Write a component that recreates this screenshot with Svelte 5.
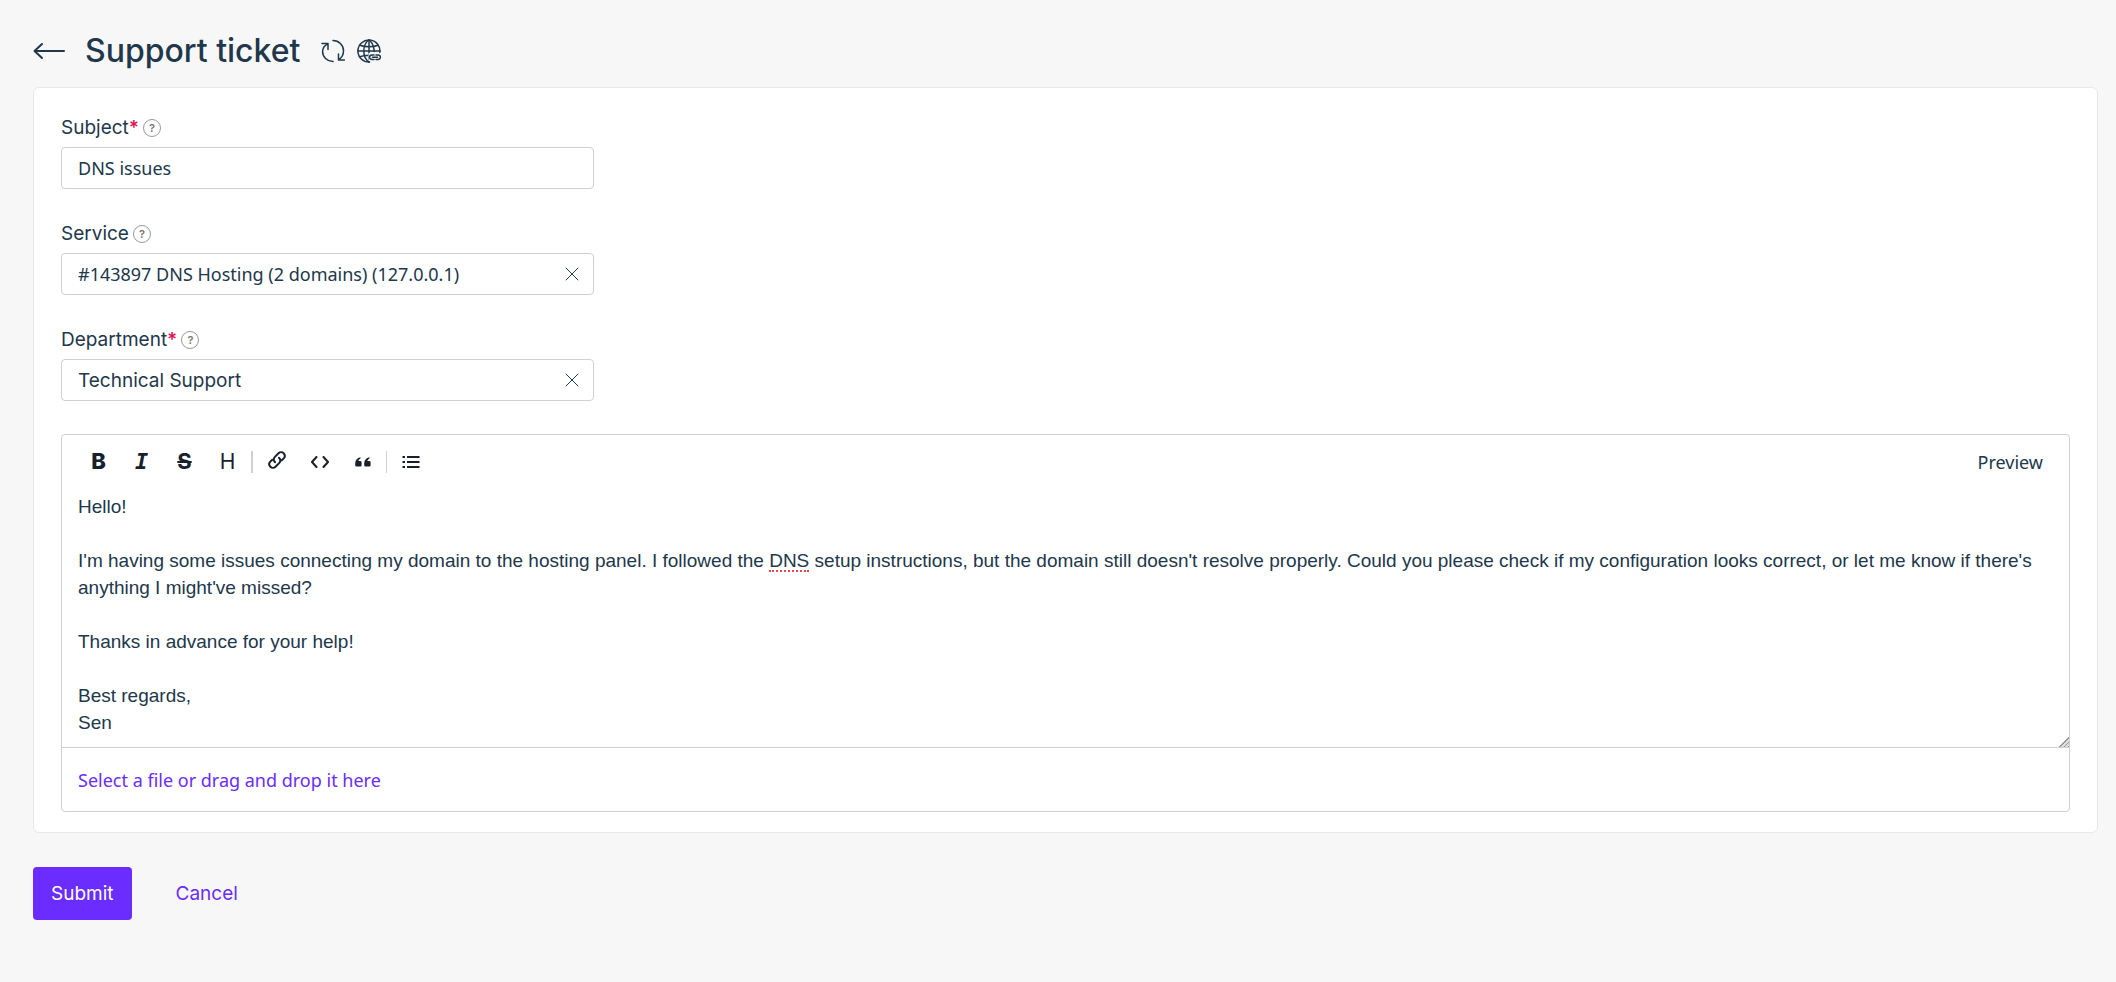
<script lang="ts">
  let subject    = $state('DNS issues')
  let service    = $state('143897')
  let department = $state('technical')
  let scrollTop  = $state(0)

  let message = $state(`Hello!

I'm having some issues connecting my domain to the hosting panel. I followed the DNS setup instructions, but the domain still doesn't resolve properly. Could you please check if my configuration looks correct, or let me know if there's anything I might've missed?

Thanks in advance for your help!

Best regards,
Sen`)

  // Split so that flagged words keep their own chunk in the highlight layer.
  const chunks = $derived(message.split(/(\bDNS\b)/))

  function submit(e: SubmitEvent) {
    e.preventDefault()
  }
</script>

{#snippet help(text: string)}
  <button type="button" class="help" title={text} aria-label={text}>?</button>
{/snippet}

{#snippet clear(label: string, onclear: () => void)}
  <button type="button" class="clear" aria-label={label} onclick={onclear}>
    <svg width="14" height="14" viewBox="0 0 14 14"><path d="M1 1 13 13M13 1 1 13" /></svg>
  </button>
{/snippet}

<form class="page" onsubmit={submit}>
  <header class="head">
    <a class="back" href="#tickets" aria-label="Back">
      <svg width="34" height="20" viewBox="0 0 34 20"><path d="M31 10H2M9 3 1.500 10 9 17" /></svg>
    </a>
    <h1>Support ticket</h1>
    <div class="head-tools">
      <button type="button" class="icon-btn" aria-label="Refresh">
        <svg width="24" height="24" viewBox="0 0 24 24">
          <path d="M1 4.500h6v6M6.600 4.800C3.500 6.500 1.600 9.300 1.600 12.600c0 5.400 4.200 9.700 10.400 10" />
          <path d="M12 1.500c5.800 0 10.500 4.700 10.500 10.300 0 3.800-1.700 6.900-4.700 8.900M17.500 15v6h6" />
        </svg>
      </button>
      <button type="button" class="icon-btn" aria-label="Public link">
        <svg width="24" height="24" viewBox="0 0 24 24">
          <path d="M12.500 23A11 11 0 1 1 22.800 13.500" />
          <path d="M12 23C9 21 6.800 17 6.800 12S9 3 12 1c2.800 2 4.900 5.600 5.200 11.500" />
          <path d="M12 1v22M1 12h22M3 6.300c5 2 13 2 18 0M3 17.700c2.500-1 5.500-1.500 8.500-1.500" />
          <rect class="plate" x="11.500" y="14" width="13" height="8" />
          <path d="M17 20.500h-2.200a2.200 2.200 0 0 1 0-4.500H17M19 16h2.200a2.200 2.200 0 0 1 0 4.500H19M15.500 18.200h5" />
        </svg>
      </button>
    </div>
  </header>

  <section class="card">
    <div class="field">
      <div class="label-row">
        <label for="subject">Subject<b>*</b></label>
        {@render help('Short summary of the problem')}
      </div>
      <div class="control">
        <input id="subject" type="text" bind:value={subject} />
      </div>
    </div>

    <div class="field">
      <div class="label-row">
        <label for="service">Service</label>
        {@render help('Service the ticket is about')}
      </div>
      <div class="control">
        <select id="service" bind:value={service}>
          <option value=""></option>
          <option value="143897">#143897 DNS Hosting (2 domains) (127.0.0.1)</option>
        </select>
        {@render clear('Clear service', () => (service = ''))}
      </div>
    </div>

    <div class="field">
      <div class="label-row">
        <label for="department">Department<b>*</b></label>
        {@render help('Team that handles the ticket')}
      </div>
      <div class="control">
        <select id="department" class="sans" bind:value={department}>
          <option value=""></option>
          <option value="technical">Technical Support</option>
        </select>
        {@render clear('Clear department', () => (department = ''))}
      </div>
    </div>

    <div class="editor">
      <div class="toolbar">
        <button type="button" class="tool bold" aria-label="Bold">B</button>
        <button type="button" class="tool italic" aria-label="Italic">I</button>
        <button type="button" class="tool strike" aria-label="Strikethrough">S</button>
        <button type="button" class="tool heading" aria-label="Heading">H</button>
        <span class="sep wide"></span>
        <button type="button" class="tool raised" aria-label="Link">
          <svg width="20" height="20" viewBox="0 0 20 20">
            <path d="M8 12.200C6.300 10.500 6.500 8.300 7.900 6.900L11.500 3.300C13 1.800 15.200 1.900 16.600 3.300S18.100 6.900 16.700 8.400L14.800 10.300" />
            <path d="M12 7.800C13.700 9.500 13.500 11.700 12.100 13.100L8.500 16.700C7 18.200 4.800 18.100 3.400 16.700S1.900 13.100 3.300 11.600L5.200 9.700" />
          </svg>
        </button>
        <button type="button" class="tool" aria-label="Code">
          <svg width="20" height="12" viewBox="0 0 20 12"><path d="M6.500 1 2 6l4.500 5M13.500 1 18 6l-4.500 5" /></svg>
        </button>
        <button type="button" class="tool" aria-label="Quote">
          <svg class="solid" width="16" height="10" viewBox="0 0 16 10">
            <path d="M5.500.3C2 1 .2 3.300.2 6.500V8.200Q.2 9.600 1.600 9.600H5.200Q6.600 9.600 6.600 8.200V5.400Q6.600 4 5.200 4H3.400C3.700 2.800 4.400 2 5.500 1.600Z" />
            <path d="M14.500.3C11 1 9.200 3.300 9.200 6.500V8.200Q9.200 9.600 10.600 9.600H14.200Q15.600 9.600 15.600 8.200V5.400Q15.600 4 14.200 4H12.400C12.700 2.800 13.400 2 14.500 1.600Z" />
          </svg>
        </button>
        <span class="sep"></span>
        <button type="button" class="tool" aria-label="Bulleted list">
          <svg width="18" height="14" viewBox="0 0 18 14">
            <path class="lines" d="M5 2h12.500M5 7h12.500M5 12h12.500M.5 2H3M.5 7H3M.5 12H3" />
          </svg>
        </button>
        <button type="button" class="preview">Preview</button>
      </div>

      <div class="message">
        <textarea
          aria-label="Message"
          rows="9"
          spellcheck="false"
          bind:value={message}
          onscroll={(e) => (scrollTop = e.currentTarget.scrollTop)}
        ></textarea>
        <!-- Same text, hidden: only the marks under flagged words show -->
        <div class="marks" aria-hidden="true">
          <div style:margin-top="{-scrollTop}px">{#each chunks as chunk}{#if chunk === 'DNS'}<span class="typo">{chunk}</span>{:else}{chunk}{/if}{/each}</div>
        </div>
      </div>

      <div class="attach">
        <button type="button" class="link attach-link">Select a file or drag and drop it here</button>
      </div>
    </div>
  </section>

  <footer class="actions">
    <button type="submit" class="submit">Submit</button>
    <button type="button" class="link">Cancel</button>
  </footer>
</form>

<style>
  :global(body) { background: #f7f7f7; }

  .page {
    padding: 25px 18px 60px 33px;
    color: #21374b;
    font: 400 19px/27px Inter, "Liberation Sans", sans-serif;
  }
  .page :is(button, input, select, textarea) {
    box-sizing: border-box;
    margin: 0;
    color: inherit;
    font: inherit;
  }
  button {
    padding: 0;
    border: 0;
    background: none;
    cursor: pointer;
  }
  svg {
    display: block;
    fill: none;
    stroke: currentColor;
    stroke-width: 2;
    stroke-linecap: round;
    stroke-linejoin: round;
  }

  .head {
    display: flex;
    align-items: center;
    height: 52px;
    margin-bottom: 10px;
  }
  .back { color: inherit; }
  h1 {
    margin: 0 21px 0 18px;
    font-size: 32px;
    font-weight: 500;
    line-height: 40px;
  }
  .head-tools { display: flex; gap: 12px; }
  .head-tools svg { stroke-width: 1.5; }
  .plate { fill: #f7f7f7; stroke: none; }

  .card {
    padding: 26px 27px 20px;
    border: 1px solid #e8e8e8;
    border-radius: 6px;
    background: #fff;
  }

  .field {
    max-width: 533px;
    margin-bottom: 31px;
  }
  .label-row {
    display: flex;
    align-items: center;
    gap: 4px;
    margin-bottom: 6px;
  }
  .label-row b { color: #df1455; font-weight: 600; }
  .page .help {
    width: 18px;
    height: 18px;
    border: 1px solid #999;
    border-radius: 50%;
    color: #777;
    font-size: 11px;
    font-weight: 600;
    line-height: 16px;
  }

  .control {
    display: flex;
    align-items: center;
    height: 42px;
    box-sizing: border-box;
    border: 1px solid #d0d0d0;
    border-radius: 4px;
    background: #fff;
  }
  .page :is(.control input, .control select) {
    flex: 1;
    min-width: 0;
    height: 40px;
    padding: 0 16px;
    border: 0;
    outline: 0;
    background: none;
    appearance: none;
    font-family: "Noto Sans", "Open Sans", sans-serif;
    font-size: 18px;
  }
  .page .control select.sans { font-family: Inter, sans-serif; font-size: 19px; }
  .clear { padding: 6px; }
  .page .clear { margin-right: 8px; }
  .clear svg { stroke-width: 1; }

  .editor {
    margin-top: 33px;
    border: 1px solid #d0d0d0;
    border-radius: 4px;
  }
  .toolbar {
    display: flex;
    align-items: center;
    height: 54px;
    padding: 0 26px 0 15px;
    color: #17212b;
  }
  .tool {
    display: flex;
    align-items: center;
    justify-content: center;
    width: 43px;
    height: 32px;
  }
  .raised { padding-bottom: 4px; }
  .solid { fill: currentColor; stroke: none; }
  .lines { stroke-linecap: butt; }
  .page .bold { font-size: 22px; font-weight: 800; }
  .page .italic { font: italic 700 22px "DejaVu Sans Mono", monospace; }
  .page .strike { font-size: 22px; font-weight: 700; text-decoration: line-through; }
  .page .heading { font-size: 21px; }
  .bold, .italic, .strike, .heading { padding-bottom: 2px; }
  .sep {
    width: 1px;
    height: 22px;
    margin: 0 2px;
    background: #d0d0d0;
  }
  .wide { width: 2px; }
  .page .preview {
    margin-left: auto;
    color: #21374b;
    font-family: "Noto Sans", "Open Sans", sans-serif;
    font-size: 18px;
  }

  .message {
    position: relative;
    display: flex;
    border-bottom: 1px solid #d0d0d0;
  }
  .page textarea,
  .marks {
    padding: 4px 16px 11px;
    font: 400 19px/27px "Liberation Sans", Arial, sans-serif;
    white-space: pre-wrap;
    overflow-wrap: break-word;
  }
  textarea {
    display: block;
    width: 100%;
    border: 0;
    outline: 0;
    background: none;
    resize: vertical;
  }
  textarea::-webkit-resizer {
    background: linear-gradient(135deg, transparent 14px, #999 14px 15px, #ddd 15px 17px, #999 17px 18px, #ddd 18px 20px, #999 20px);
  }
  .marks {
    position: absolute;
    inset: 0;
    overflow: hidden;
    visibility: hidden;
    pointer-events: none;
  }
  .typo { position: relative; }
  .typo::after {
    content: "";
    position: absolute;
    inset: auto 0 -1px;
    border-bottom: 2px dotted #e5484d;
    visibility: visible;
  }

  .attach {
    display: flex;
    align-items: center;
    height: 63px;
    padding: 1px 16px 0;
    box-sizing: border-box;
  }
  .page .link { color: #6a2cff; }
  .page .attach-link {
    font-family: "Noto Sans", "Open Sans", sans-serif;
    font-size: 18px;
  }

  .actions {
    display: flex;
    align-items: center;
    gap: 44px;
    margin-top: 34px;
  }
  .page .submit {
    height: 53px;
    padding: 0 18px;
    border-radius: 4px;
    background: #6a2cff;
    color: #fff;
  }
</style>
